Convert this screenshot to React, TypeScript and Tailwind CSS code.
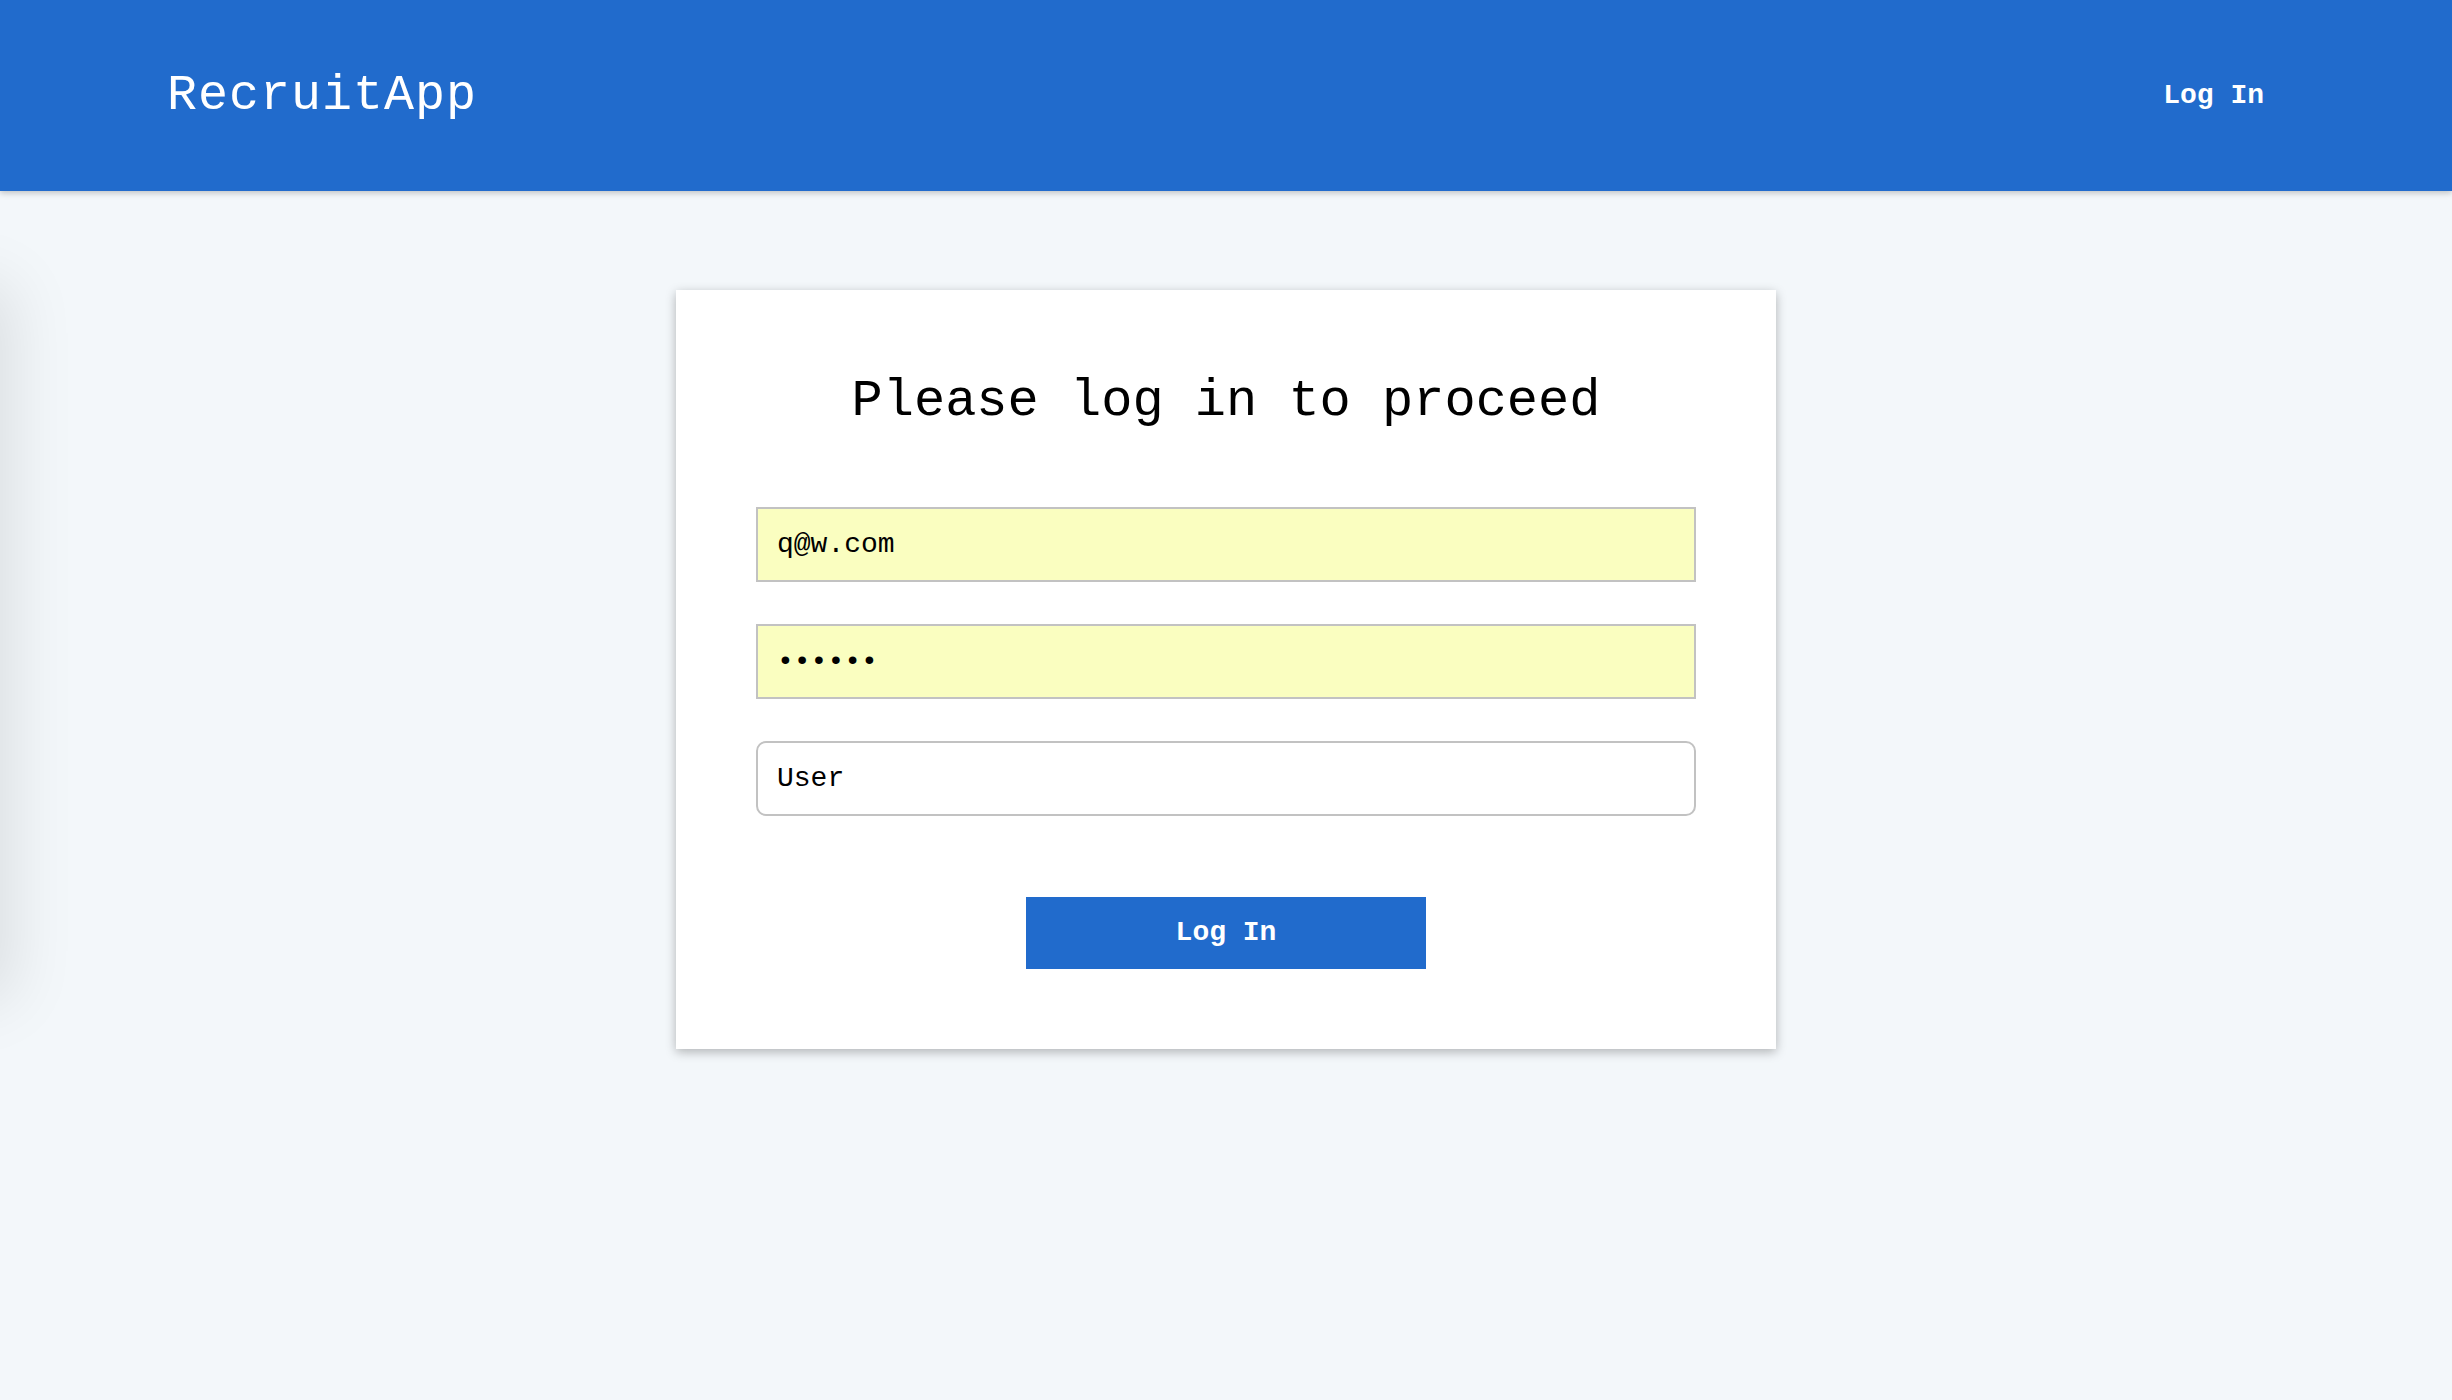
import React from "react";

function Header() {
  return (
    <header className="relative z-10 h-[191px] bg-[#216BCC] flex items-center justify-between pl-[167px] pr-[188px] shadow-[0_2px_6px_rgba(0,0,0,0.22)]">
      <span className="text-white text-[50px] tracking-[0.02em]">RecruitApp</span>
      <a href="#" className="text-white text-[28px] font-bold">
        Log In
      </a>
    </header>
  );
}

function LoginCard() {
  return (
    <div className="w-[1100px] bg-white px-[80px] pt-[86px] pb-[80px] shadow-[0_3px_10px_rgba(0,0,0,0.28)]">
      <h1 className="text-center text-black text-[52px] leading-none">
        Please log in to proceed
      </h1>
      <form className="mt-[79px] flex flex-col gap-[42px]">
        <input
          type="email"
          readOnly
          defaultValue="q@w.com"
          className="h-[75px] w-full border-2 border-[#C2C2C2] bg-[#FAFEC0] px-[19px] text-[28px] text-black outline-none"
        />
        <input
          type="password"
          readOnly
          defaultValue="123456"
          className="h-[75px] w-full border-2 border-[#C2C2C2] bg-[#FAFEC0] px-[19px] text-[28px] text-black outline-none"
        />
        <input
          type="text"
          readOnly
          defaultValue="User"
          className="h-[75px] w-full rounded-[10px] border-2 border-[#C2C2C2] bg-white px-[19px] text-[28px] text-black outline-none"
        />
        <div className="flex justify-center mt-[39px]">
          <button
            type="button"
            className="w-[400px] h-[72px] bg-[#216BCC] text-white text-[28px] font-bold"
          >
            Log In
          </button>
        </div>
      </form>
    </div>
  );
}

export default function App() {
  return (
    <div className="relative min-h-screen overflow-hidden bg-[#F3F7FA] font-['Liberation_Mono',monospace]">
      {/* drawer hidden off the left edge, only its shadow shows */}
      <div className="absolute left-[-300px] top-[297px] w-[300px] h-[690px] bg-white shadow-[0_0_60px_12px_rgba(0,0,0,0.10)]" />
      <Header />
      <main className="flex justify-center pt-[99px]">
        <LoginCard />
      </main>
    </div>
  );
}
